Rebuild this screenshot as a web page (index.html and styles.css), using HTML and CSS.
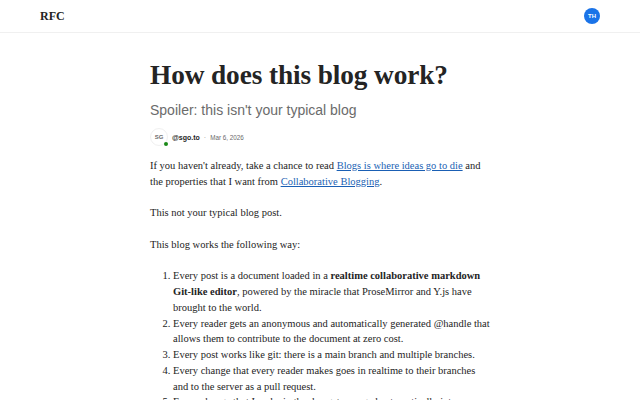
FILE: index.html
```html
<!DOCTYPE html>
<html lang="en">
<head>
<meta charset="utf-8">
<title>How does this blog work?</title>
<link rel="stylesheet" href="styles.css">
</head>
<body>
<header class="topbar">
  <a class="brand">RFC</a>
  <span class="me">TH</span>
</header>
<main class="post">
  <h1 class="title">How does this blog work?</h1>
  <h2 class="subtitle">Spoiler: this isn't your typical blog</h2>
  <div class="byline">
    <span class="avatar">SG<i class="dot"></i></span>
    <span class="handle">@sgo.to</span>
    <span class="sep">·</span>
    <span class="date">Mar 6, 2026</span>
  </div>
  <p>If you haven't already, take a chance to read <a href="#">Blogs is where ideas go to die</a> and the properties that I want from <a href="#">Collaborative Blogging</a>.</p>
  <p>This not your typical blog post.</p>
  <p>This blog works the following way:</p>
  <ol>
    <li>Every post is a document loaded in a <b>realtime collaborative markdown Git-like editor</b>, powered by the miracle that ProseMirror and Y.js have brought to the world.</li>
    <li>Every reader gets an anonymous and automatically generated @handle that allows them to contribute to the document at zero cost.</li>
    <li>Every post works like git: there is a main branch and multiple branches.</li>
    <li>Every change that every reader makes goes in realtime to their branches and to the server as a pull request.</li>
    <li>Every change that I make in the doc gets merged automatically into</li>
  </ol>
</main>
</body>
</html>
```
FILE: styles.css
```css
html, body { margin: 0; padding: 0; height: 400px; overflow: hidden; background: #fff; }
body { font-family: "Liberation Serif", serif; color: #242424; }
.topbar { height: 32px; box-sizing: content-box; border-bottom: 1px solid #f0f0f0; display: flex; align-items: center; justify-content: space-between; padding: 0 40px; }
.brand { font-size: 12px; font-weight: 700; color: #242424; }
.me { width: 16px; height: 16px; border-radius: 50%; background: #1a73e8; color: #fff; font: 700 6px/16px "Liberation Sans", sans-serif; text-align: center; }
.post { width: 340px; margin: 0 auto; padding-top: 24px; }
.title { margin: 0; font-size: 27.3px; letter-spacing: -0.1px; line-height: 36px; font-weight: 700; color: #242424; white-space: nowrap; }
.subtitle { margin: 7px 0 0; font: 400 14px/20px "Liberation Sans", sans-serif; color: #6b6b6b; }
.byline { display: flex; align-items: center; margin-top: 7px; height: 20px; font-family: "Liberation Sans", sans-serif; }
.avatar { position: relative; box-sizing: border-box; width: 18px; height: 18px; border: 1px solid #f0f0f0; border-radius: 50%; font-size: 6px; font-weight: 700; line-height: 16px; text-align: center; color: #6b6b6b; }
.dot { position: absolute; right: -1px; bottom: -1px; width: 4px; height: 4px; border-radius: 50%; background: #1a8917; }
.handle { margin-left: 4px; font-size: 7px; font-weight: 700; color: #242424; }
.sep { margin: 0 4px; font-size: 7px; color: #999; }
.date { font-size: 6.3px; color: #6b6b6b; }
p { margin: 0 0 15.75px; font-size: 10.5px; line-height: 15.75px; }
.byline + p { margin-top: 11px; }
a { color: #1a5fb4; }
ol { margin: 0; padding-left: 23px; font-size: 10.5px; line-height: 15.75px; }
```
